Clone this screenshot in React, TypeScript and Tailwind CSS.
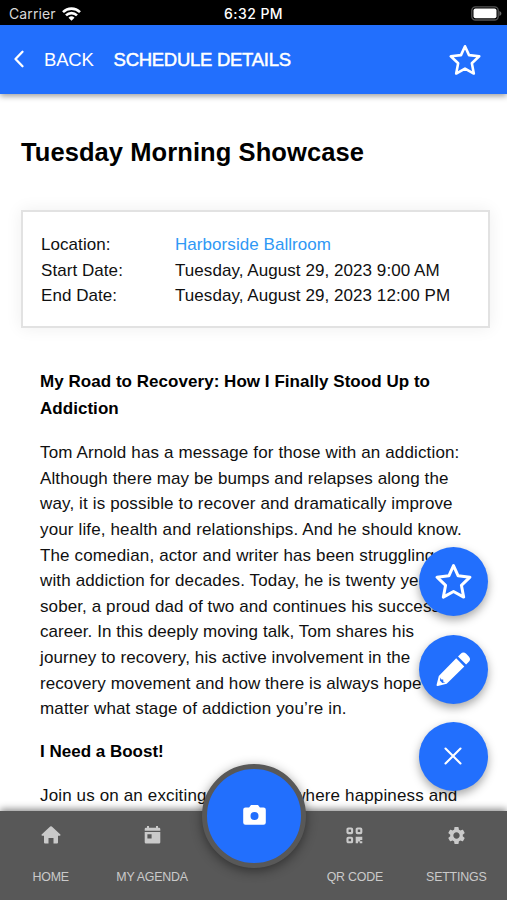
import React from "react";
import { MdSettings } from "react-icons/md";

const details = [
  { label: "Location:", value: "Harborside Ballroom", color: "text-[#2f98f5]" },
  { label: "Start Date:", value: "Tuesday, August 29, 2023 9:00 AM", color: "" },
  { label: "End Date:", value: "Tuesday, August 29, 2023 12:00 PM", color: "" },
];

const talk = [
  { text: "Tom Arnold has a message for those with an addiction:", spacing: "tracking-[0.14px]" },
  { text: "Although there may be bumps and relapses along the", spacing: "tracking-[0.1px]" },
  { text: "way, it is possible to recover and dramatically improve", spacing: "tracking-[0.14px]" },
  { text: "your life, health and relationships. And he should know.", spacing: "tracking-[0.14px]" },
  { text: "The comedian, actor and writer has been struggling", spacing: "tracking-[0.14px]" },
  { text: "with addiction for decades. Today, he is twenty years", spacing: "tracking-[0.14px]" },
  { text: "sober, a proud dad of two and continues his successful", spacing: "tracking-[0.1px]" },
  { text: "career. In this deeply moving talk, Tom shares his", spacing: "tracking-[0.06px]" },
  { text: "journey to recovery, his active involvement in the", spacing: "tracking-[0.1px]" },
  { text: "recovery movement and how there is always hope no", spacing: "tracking-[0.08px]" },
  { text: "matter what stage of addiction you’re in.", spacing: "tracking-[0.15px]" },
];

function StatusBar() {
  return (
    <div className="grid h-[25px] grid-cols-3 items-center bg-black px-[9px] text-[14px] text-white">
      <div className="flex items-center gap-1.5 pt-[3px] text-[#d8d8d8]">
        <span className="font-['Inter'] leading-none tracking-[0.1px]">Carrier</span>
        <svg width="19" height="14" viewBox="0 0 19 14" fill="none" stroke="#fff" strokeWidth="2.6">
          <path d="M1 5.1a12.2 12.2 0 0 1 17 0" />
          <path d="M4 8.4a7.8 7.8 0 0 1 11 0" />
          <path d="M9.5 13.7 6.5 10.7a4.3 4.3 0 0 1 6 0z" fill="#fff" stroke="none" />
        </svg>
      </div>
      <span className="pt-[3px] text-center font-['Inter'] leading-none font-medium tracking-[0.45px]">
        6:32 PM
      </span>
      <div className="flex justify-end pt-[2px]">
        <svg className="-mr-[4px]" width="31" height="15" viewBox="0 0 31 15">
          <rect x=".8" y=".8" width="26.4" height="13.2" rx="3.6" fill="none" stroke="#555" strokeWidth="1.3" />
          <rect x="2.5" y="2.5" width="23" height="9.8" rx="2" fill="#fff" />
          <path d="M28.4 5v5c1.2-.4 2-1.4 2-2.5s-.8-2.1-2-2.5z" fill="#666" />
        </svg>
      </div>
    </div>
  );
}

function Star({ className }: { className: string }) {
  return (
    <svg className={className} viewBox="0 0 36 36" fill="none" stroke="currentColor" strokeWidth="2.9" strokeLinejoin="round">
      <path d="M18 2.5 22.5 12.500 34 13.800 25.700 21.700 27.900 33.200 18 27.700 8.100 33.200 10.300 21.700 2 13.800 13.500 12.500z" />
    </svg>
  );
}

function Header() {
  return (
    <div className="relative flex h-[69px] items-center bg-[#226ffd] pr-[26px] pl-[13px] text-white shadow-[0_2px_6px_rgba(0,0,0,0.4)]">
      <svg className="-mt-[2px]" width="12" height="18" viewBox="0 0 12 18" fill="none" stroke="currentColor" strokeWidth="2.3">
        <path d="M9.500 1.800 2.500 9l7 7.200" strokeLinecap="round" strokeLinejoin="round" />
      </svg>
      <span className="ml-[19px] text-[18.5px] tracking-[-0.2px]">BACK</span>
      <span className="ml-[20px] text-[18.5px] tracking-[-0.28px] [-webkit-text-stroke:0.5px_white]">
        SCHEDULE DETAILS
      </span>
      <Star className="ml-auto size-[32px]" />
    </div>
  );
}

function Details() {
  return (
    <div className="mt-[42px] mr-[17px] ml-[21px] flex h-[118px] flex-col justify-center border-2 border-[#e2e2e2] pt-[3px] pl-[18px] shadow-[0_0_16px_rgba(0,0,0,0.07)]">
      {details.map((d) => (
        <div key={d.label} className="flex h-[25.7px] items-center text-[17px] tracking-[0.06px]">
          <span className="w-[134px]">{d.label}</span>
          <span className={d.color}>{d.value}</span>
        </div>
      ))}
    </div>
  );
}

function Talks() {
  return (
    <div className="mt-[40px] pl-[40px] text-[17px] whitespace-nowrap">
      <h2 className="pt-px leading-[26.5px] font-bold tracking-[0.04px] text-black">
        My Road to Recovery: How I Finally Stood Up to
        <br />
        Addiction
      </h2>
      <div className="mt-[18px]">
        {talk.map((line) => (
          <p key={line.text} className={`h-[25.65px] leading-[25.65px] ${line.spacing}`}>
            {line.text}
          </p>
        ))}
      </div>
      <h2 className="mt-[17px] leading-[26px] font-bold text-black">I Need a Boost!</h2>
      <p className="mt-[18px] leading-[26px] tracking-[0.14px]">
        Join us on an exciting adventure where happiness and
      </p>
    </div>
  );
}

function ActionButton({ children }: { children: React.ReactNode }) {
  return (
    <button className="flex size-[69px] items-center justify-center rounded-full bg-[#226ffd] text-white shadow-[0_4px_10px_rgba(0,0,0,0.35)]">
      {children}
    </button>
  );
}

function FloatingActions() {
  return (
    <div className="absolute top-[547px] right-[19.5px] flex flex-col gap-[18.5px]">
      <ActionButton>
        <Star className="-mt-px size-[37px]" />
      </ActionButton>
      <ActionButton>
        <svg width="56" height="56" viewBox="0 0 56 56" fill="currentColor">
          <path
            fillRule="evenodd"
            d="M31.200 17.300 39.300 25.400 21.700 42.700 12.800 44.900Q11.300 45.200 11.600 43.700L13.800 34.900zM15.600 36.600 14.900 39.600 17.300 42 20.400 41.200 18.300 40.700 18.200 38.600 16.300 38.500z"
          />
          <path d="M33 15.500 35.500 13Q38.300 10.200 41.200 12.800L43.800 15.400Q46.400 18.300 43.600 21.100L41.100 23.600z" />
        </svg>
      </ActionButton>
      <ActionButton>
        <svg className="-mt-[2px]" width="18" height="18" viewBox="0 0 18 18" stroke="currentColor" strokeWidth="2.1" strokeLinecap="round">
          <path d="M1.5 1.5 16.5 16.5M16.5 1.5 1.5 16.5" />
        </svg>
      </ActionButton>
    </div>
  );
}

function HomeIcon() {
  return (
    <svg width="20" height="18" viewBox="0 0 20 18" fill="currentColor">
      <path d="M9.200.6Q10 0 10.800.6L19.400 8.500Q20 9.600 18.800 9.800H17v6.700q0 1-1 1h-3.500v-5.400h-5v5.400H4q-1 0-1-1V9.800H1.200Q0 9.600.6 8.500z" />
    </svg>
  );
}

function AgendaIcon() {
  return (
    <svg width="17" height="18" viewBox="0 0 17 18" fill="currentColor">
      <path d="M3 0h2v1.700h7V0h2v1.700h1q1.300 0 1.300 1.300v1.800H.7V3Q.7 1.700 2 1.700h1z" />
      <path fillRule="evenodd" d="M.7 5.900h15.600v10.300q0 1.300-1.300 1.300H2Q.7 17.500.7 16.200zM3.400 8.300v4.200h4.200V8.300z" />
    </svg>
  );
}

function QrIcon() {
  return (
    <svg width="17" height="17" viewBox="0 0 17 17" fill="none" stroke="currentColor" strokeWidth="2.1">
      <rect x="1.5" y="1.5" width="4.600" height="4.600" rx=".8" />
      <rect x="10.700" y="1.5" width="4.600" height="4.600" rx=".8" />
      <rect x="1.5" y="10.700" width="4.600" height="4.600" rx=".8" />
      <path d="M9.700 9.700h6.600v3.200h-2.100v1.400h2.100v2h-2.600v-1.800h-1.600v1.800H9.700z" fill="currentColor" stroke="none" />
    </svg>
  );
}

function Tab({ icon, label }: { icon: React.ReactNode; label: string }) {
  return (
    <div className="flex flex-col items-center">
      <div className="flex h-[48px] items-center">{icon}</div>
      <span className="mt-[9px] text-[12.4px] leading-[18px] tracking-[-0.2px] whitespace-nowrap">{label}</span>
    </div>
  );
}

function TabBar() {
  return (
    <div className="absolute inset-x-0 bottom-0 grid h-[89px] grid-cols-5 bg-[#585858] text-[#cacaca] shadow-[0_-2px_7px_rgba(0,0,0,0.45)]">
      <Tab icon={<HomeIcon />} label="HOME" />
      <Tab icon={<AgendaIcon />} label="MY AGENDA" />
      <div />
      <Tab icon={<QrIcon />} label="QR CODE" />
      <Tab icon={<MdSettings className="size-[21px]" />} label="SETTINGS" />
    </div>
  );
}

function CameraButton() {
  return (
    <button className="absolute top-[763.5px] left-[202px] flex size-[104px] items-center justify-center rounded-full border-[5.5px] border-[#585858] bg-[#226ffd] shadow-[0_3px_12px_rgba(0,0,0,0.45)]">
      <svg className="-mt-[2px]" width="23" height="20" viewBox="0 0 23 20">
        <path
          fill="#fff"
          fillRule="evenodd"
          d="M8 0h7l1.900 2.500h3.600A2.300 2.300 0 0 1 22.800 4.800v12.700a2.300 2.300 0 0 1-2.300 2.300h-18A2.300 2.300 0 0 1 .2 17.500V4.800a2.300 2.300 0 0 1 2.300-2.300h3.600zM11.500 7a4 4 0 1 0 0 8 4 4 0 0 0 0-8z"
        />
      </svg>
    </button>
  );
}

export default function App() {
  return (
    <div className="relative h-[900px] w-[507px] overflow-hidden bg-white font-['Liberation_Sans',Arial,sans-serif] text-[#101010]">
      <StatusBar />
      <Header />
      <h1 className="mt-[42px] ml-[21px] text-[25.5px] leading-[32px] font-bold tracking-[0.08px] text-black">
        Tuesday Morning Showcase
      </h1>
      <Details />
      <Talks />
      <FloatingActions />
      <TabBar />
      <CameraButton />
    </div>
  );
}
